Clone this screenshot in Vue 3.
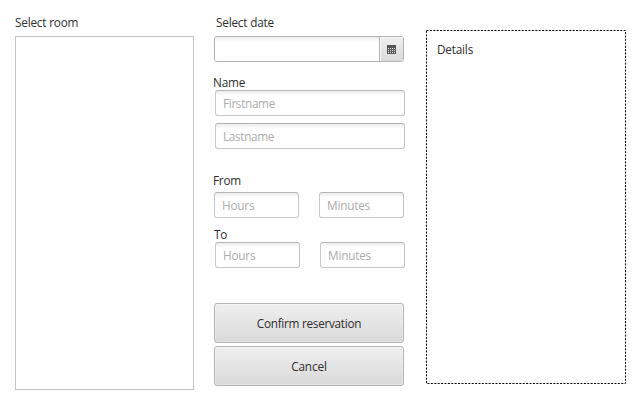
<script setup>
const times = [
  { label: 'From', key: 'from' },
  { label: 'To', key: 'to' }
]
const dots = [3, 5, 7].flatMap(y => [1, 3, 5, 7].map(x => ({ x, y })))
</script>

<template>
  <main class="window">
    <section class="rooms">
      <label class="label">Select room</label>
      <div class="list"></div>
    </section>

    <section class="form">
      <label class="label date-label">Select date</label>
      <div class="date">
        <input class="date-input" type="text" />
        <button class="date-button" type="button" aria-label="Open calendar">
          <svg width="9" height="9" viewBox="0 0 9 9" shape-rendering="crispEdges">
            <rect width="9" height="9" fill="#555" />
            <rect v-for="d in dots" :key="d.x + '-' + d.y" :x="d.x" :y="d.y" width="1" height="1" fill="#eee" />
          </svg>
        </button>
      </div>

      <label class="label name-label">Name</label>
      <div class="names">
        <input class="field first" type="text" placeholder="Firstname" />
        <input class="field last" type="text" placeholder="Lastname" />
      </div>

      <div v-for="t in times" :key="t.key" :class="['time', t.key]">
        <label class="label time-label">{{ t.label }}</label>
        <div class="pair">
          <input class="field hours" type="text" placeholder="Hours" />
          <input class="field minutes" type="text" placeholder="Minutes" />
        </div>
      </div>

      <div class="actions">
        <button class="action confirm" type="button">Confirm reservation</button>
        <button class="action cancel" type="button">Cancel</button>
      </div>
    </section>

    <aside class="details">
      <svg class="outline" width="200" height="354" viewBox="0 0 200 354">
        <rect x="0.5" y="0.5" width="199" height="353" fill="none" stroke="#000" stroke-dasharray="2 1.4" />
      </svg>
      <span class="label">Details</span>
    </aside>
  </main>
</template>

<style>
body {
  background: #fff;
}
</style>

<style scoped>
* {
  box-sizing: border-box;
}
.window {
  display: flex;
  width: 640px;
  height: 400px;
  overflow: hidden;
  background: #fff;
  color: #2e2e2e;
  font: 11.75px/16px "Open Sans", "Noto Sans", sans-serif;
  letter-spacing: -0.19px;
}
.label {
  display: block;
  height: 16px;
  line-height: 14px;
  white-space: nowrap;
}
input,
button {
  font: inherit;
  letter-spacing: inherit;
  color: inherit;
  margin: 0;
}
.rooms {
  width: 179px;
  margin: 15px 0 0 15px;
}
.list {
  height: 354px;
  margin-top: 5px;
  border: 1px solid #c4c4c4;
}
.form {
  width: 191px;
  margin: 15px 0 0 20px;
}
.date-label {
  padding-left: 2px;
}
.date {
  display: flex;
  width: 190px;
  height: 26px;
  margin-top: 5px;
  border: 1px solid #b2b2b2;
  border-radius: 3px;
  overflow: hidden;
}
.date-input {
  flex: 1;
  min-width: 0;
  border: 0;
  padding: 0 7px;
  background: linear-gradient(#ededed, #fff 5px);
}
.date-button {
  display: flex;
  align-items: center;
  justify-content: center;
  width: 24px;
  padding: 0;
  border: 0;
  border-left: 1px solid #b2b2b2;
  background: linear-gradient(#efefef, #dadada);
  box-shadow: inset 1px 1px #f7f7f7;
}
.name-label {
  margin: 13px 0 0 -1px;
}
.names {
  display: flex;
  flex-direction: column;
  gap: 7px;
  margin: -1px 0 0 1px;
}
.field {
  display: block;
  width: 100%;
  height: 26px;
  padding: 0 7px 1px;
  border: 1px solid #c6c6c6;
  border-top-color: #b5b5b5;
  border-radius: 3px;
  background: linear-gradient(#ededed, #fff 5px);
}
.first,
.last {
  letter-spacing: -0.32px;
}
.field::placeholder {
  color: #acacac;
  opacity: 1;
}
.from {
  margin-top: 24px;
}
.to {
  margin-top: 9px;
}
.time-label {
  margin-left: -1px;
}
.to .time-label {
  margin-left: 0;
}
.pair {
  display: grid;
  grid-template-columns: 85px 85px;
  gap: 20px;
  margin-top: 3px;
}
.to .pair {
  margin: -1px 0 0 1px;
}
.actions {
  display: grid;
  gap: 3px;
  width: 190px;
  margin-top: 35px;
}
.action {
  height: 40px;
  padding: 0;
  border: 1px solid #b3b3b3;
  border-radius: 3px;
  background: linear-gradient(#efefef, #d9d9d9);
  box-shadow: inset 0 0 0 1px rgba(255, 255, 255, 0.3);
}
.confirm {
  letter-spacing: -0.27px;
}
.cancel {
  letter-spacing: -0.1px;
}
.details {
  position: relative;
  width: 200px;
  height: 354px;
  margin: 30px 0 0 21px;
  padding: 12px 11px;
}
.outline {
  position: absolute;
  inset: 0;
}
</style>
